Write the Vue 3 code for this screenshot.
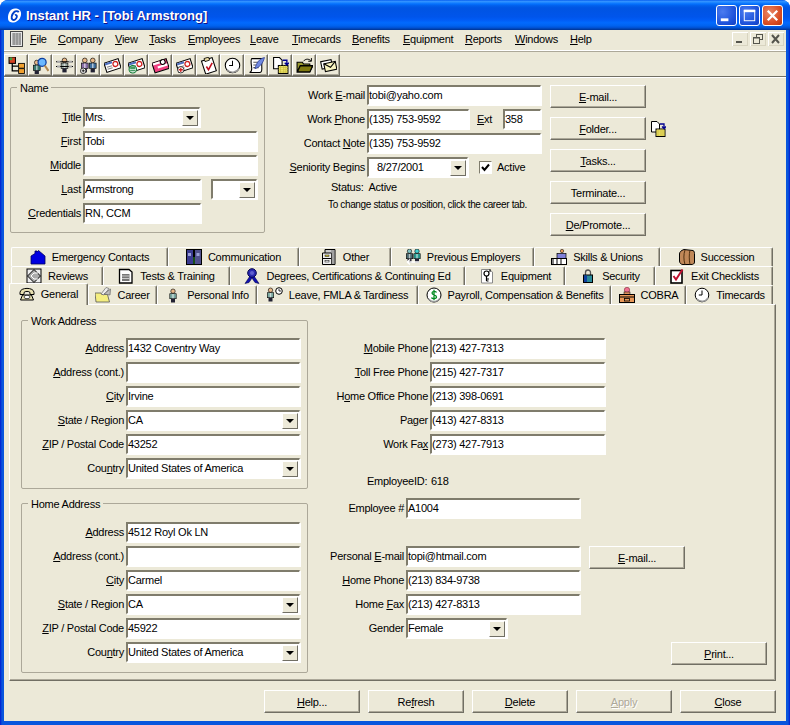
<template>
  <div class="window">
    <header class="titlebar">
      <svg class="logo" viewBox="0 0 16 16" v-html="logo"></svg>
      <span class="title">Instant HR - [Tobi Armstrong]</span>
      <div class="capbtns">
        <span class="cap"><svg viewBox="0 0 20 20" v-html="capIcons.min"></svg></span>
        <span class="cap"><svg viewBox="0 0 20 20" v-html="capIcons.max"></svg></span>
        <span class="cap red"><svg viewBox="0 0 20 20" v-html="capIcons.close"></svg></span>
      </div>
    </header>

    <nav class="menubar">
      <svg class="docicon" viewBox="0 0 14 16" v-html="docIcon"></svg>
      <span v-for="m in menus" :key="m.t" class="menu" :style="{ width: m.w + 'px' }" v-html="mn(m.t)"></span>
      <div class="mdi">
        <span class="mdibtn"><svg viewBox="0 0 14 12" v-html="capIcons.mdiMin"></svg></span>
        <span class="mdibtn"><svg viewBox="0 0 14 12" v-html="capIcons.mdiRestore"></svg></span>
        <span class="mdibtn"><svg viewBox="0 0 14 12" v-html="capIcons.mdiClose"></svg></span>
      </div>
    </nav>

    <div class="toolbar">
      <span v-for="(t, i) in tools" :key="i" class="tool"><svg class="ico17" viewBox="0 0 16 16" v-html="icons[t]"></svg></span>
    </div>

    <main class="client">
      <section class="top">
        <div class="group namegroup">
          <span class="legend">Name</span>
          <div v-for="r in nameRows" :key="r.l" class="row">
            <label class="lbl w70" v-html="mn(r.l)"></label>
            <div class="field" :style="{ width: r.w + 'px' }">
              <span class="val">{{ r.v }}</span><i v-if="r.sel" class="arrow"></i>
            </div>
            <div v-if="r.suffix" class="field suffix"><span class="val"></span><i class="arrow"></i></div>
          </div>
        </div>

        <div class="contact">
          <div v-for="r in contactRows" :key="r.l" class="row">
            <label class="lbl w100" v-html="mn(r.l)"></label>
            <div class="field" :style="{ width: r.w + 'px' }" :class="{ indent: r.indent }">
              <span class="val">{{ r.v }}</span><i v-if="r.sel" class="arrow"></i>
            </div>
            <template v-if="r.ext">
              <label class="extlbl" v-html="mn('&Ext')"></label>
              <div class="field w38"><span class="val">358</span></div>
            </template>
            <template v-if="r.active">
              <span class="check"><svg viewBox="0 0 11 11"><path d="M2 5 L4.5 8 L9 2.5" fill="none" stroke="#000" stroke-width="2"/></svg></span>
              <span class="activelbl">Active</span>
            </template>
          </div>
          <div class="status">Status:&nbsp; Active</div>
          <div class="hint">To change status or position, click the career tab.</div>
        </div>

        <div class="actions">
          <div v-for="b in topButtons" :key="b" class="actionrow">
            <button class="btn" v-html="mn(b)"></button>
            <svg v-if="b === '&Folder...'" class="ico16" viewBox="0 0 16 16" v-html="icons.fileArrow"></svg>
          </div>
        </div>
      </section>

      <section class="tabs">
        <div v-for="(row, ri) in tabRows" :key="ri" class="tabrow" :class="'tabrow' + ri">
          <div v-for="t in row" :key="t.t" class="tab" :class="{ active: t.active }" :style="{ width: t.w + 'px' }">
            <svg class="ico16" viewBox="0 0 16 16" v-html="icons[t.i]"></svg>
            <span>{{ t.t }}</span>
          </div>
        </div>
      </section>

      <section class="panel">
        <div class="addresses">
          <div v-for="g in addressGroups" :key="g.title" class="group addr" :class="g.cls">
            <span class="legend">{{ g.title }}</span>
            <div v-for="r in g.rows" :key="r.l" class="row">
              <label class="lbl w102" v-html="mn(r.l)"></label>
              <div class="field w174"><span class="val">{{ r.v }}</span><i v-if="r.sel" class="arrow"></i></div>
            </div>
          </div>
        </div>

        <div class="personal">
          <div class="phones">
            <div v-for="r in phoneRows" :key="r.l" class="row">
              <label class="lbl w120" v-html="mn(r.l)"></label>
              <div class="field w175"><span class="val">{{ r.v }}</span></div>
            </div>
          </div>
          <div class="empid"><span class="empidlbl">EmployeeID:</span><span>618</span></div>
          <div class="row empnum">
            <label class="lbl w96">Employee #</label>
            <div class="field w174"><span class="val">A1004</span></div>
          </div>
          <div class="home">
            <div v-for="r in homeRows" :key="r.l" class="row">
              <label class="lbl w96" v-html="mn(r.l)"></label>
              <div class="field" :style="{ width: r.w + 'px' }"><span class="val">{{ r.v }}</span><i v-if="r.sel" class="arrow"></i></div>
              <button v-if="r.btn" class="btn rowbtn" v-html="mn('&E-mail...')"></button>
            </div>
          </div>
          <button class="btn print" v-html="mn('&Print...')"></button>
        </div>
      </section>

      <footer class="footer">
        <button v-for="b in footerButtons" :key="b.t" class="btn" :disabled="b.off" v-html="mn(b.t)"></button>
      </footer>
    </main>
  </div>
</template>

<script setup>
const mn = (s) => s.replace(/&(.)/, '<u>$1</u>')

const menus = [
  { t: '&File', w: 28 }, { t: '&Company', w: 57 }, { t: '&View', w: 34 }, { t: '&Tasks', w: 39 },
  { t: '&Employees', w: 62 }, { t: '&Leave', w: 42 }, { t: '&Timecards', w: 60 }, { t: '&Benefits', w: 51 },
  { t: '&Equipment', w: 62 }, { t: '&Reports', w: 50 }, { t: '&Windows', w: 55 }, { t: '&Help', w: 40 },
]

const tools = ['tree', 'search', 'org', 'people', 'card', 'cardMoney', 'cardPink', 'cardPlus', 'clip', 'clock', 'scroll', 'fileArrow', 'folder', 'mail']

const nameRows = [
  { l: '&Title', v: 'Mrs.', w: 117, sel: true },
  { l: '&First', v: 'Tobi', w: 174 },
  { l: '&Middle', v: '', w: 174 },
  { l: '&Last', v: 'Armstrong', w: 118, suffix: true },
  { l: '&Credentials', v: 'RN, CCM', w: 118 },
]

const contactRows = [
  { l: 'Work &E-mail', v: 'tobi@yaho.com', w: 174 },
  { l: 'Work &Phone', v: '(135) 753-9592', w: 102, ext: true },
  { l: 'Contact &Note', v: '(135) 753-9592', w: 174 },
  { l: '&Seniority Begins', v: '8/27/2001', w: 101, sel: true, indent: true, active: true },
]

const topButtons = ['&E-mail...', '&Folder...', '&Tasks...', 'Terminate...', '&De/Promote...']

const tabRows = [
  [
    { t: 'Emergency Contacts', i: 'house', w: 157 },
    { t: 'Communication', i: 'doors', w: 131 },
    { t: 'Other', i: 'cabinet', w: 92 },
    { t: 'Previous Employers', i: 'prev', w: 143 },
    { t: 'Skills & Unions', i: 'skills', w: 126 },
    { t: 'Succession', i: 'case', w: 113 },
  ],
  [
    { t: 'Reviews', i: 'review', w: 92 },
    { t: 'Tests & Training', i: 'test', w: 127 },
    { t: 'Degrees, Certifications & Continuing Ed', i: 'ribbon', w: 235 },
    { t: 'Equipment', i: 'equip', w: 100 },
    { t: 'Security', i: 'lock', w: 90 },
    { t: 'Exit Checklists', i: 'exit', w: 118 },
  ],
  [
    { t: 'General', i: 'phone', w: 79, active: true },
    { t: 'Career', i: 'career', w: 69 },
    { t: 'Personal Info', i: 'person', w: 100 },
    { t: 'Leave, FMLA & Tardiness', i: 'leave', w: 161 },
    { t: 'Payroll, Compensation & Benefits', i: 'dollar', w: 193 },
    { t: 'COBRA', i: 'cobra', w: 75 },
    { t: 'Timecards', i: 'clock', w: 87 },
  ],
]

const addressGroups = [
  {
    title: 'Work Address', cls: 'work',
    rows: [
      { l: '&Address', v: '1432 Coventry Way' },
      { l: '&Address (cont.)', v: '' },
      { l: '&City', v: 'Irvine' },
      { l: '&State / Region', v: 'CA', sel: true },
      { l: '&ZIP / Postal Code', v: '43252' },
      { l: 'Cou&ntry', v: 'United States of America', sel: true },
    ],
  },
  {
    title: 'Home Address', cls: 'homeaddr',
    rows: [
      { l: '&Address', v: '4512 Royl Ok LN' },
      { l: '&Address (cont.)', v: '' },
      { l: '&City', v: 'Carmel' },
      { l: '&State / Region', v: 'CA', sel: true },
      { l: '&ZIP / Postal Code', v: '45922' },
      { l: 'Cou&ntry', v: 'United States of America', sel: true },
    ],
  },
]

const phoneRows = [
  { l: '&Mobile Phone', v: '(213) 427-7313' },
  { l: '&Toll Free Phone', v: '(215) 427-7317' },
  { l: 'H&ome Office Phone', v: '(213) 398-0691' },
  { l: 'Pa&ger', v: '(413) 427-8313' },
  { l: 'Work Fa&x', v: '(273) 427-7913' },
]

const homeRows = [
  { l: 'Personal &E-mail', v: 'topi@htmail.com', w: 174, btn: true },
  { l: '&Home Phone', v: '(213) 834-9738', w: 174 },
  { l: 'Home &Fax', v: '(213) 427-8313', w: 174 },
  { l: 'Gender', v: 'Female', w: 101, sel: true },
]

const footerButtons = [
  { t: '&Help...' }, { t: 'Re&fresh' }, { t: '&Delete' }, { t: '&Apply', off: true }, { t: '&Close' },
]

const logo = `<path d="M8.5 .5C12.5 .5 15 2.5 15 6c0 5-4 9.5-9.5 9.5C2.5 15.5 1 13.5 1 10.5 1 5 4 .5 8.5 .5Z" fill="#fff"/>
<path d="M12.5 4.5C11.5 3 9 3 7.5 4.5 5 7 4 11 6 12.5 7.5 13.5 10 12 10.5 9.5 10.8 8 9.5 7 8.5 7.8" fill="none" stroke="#0040c8" stroke-width="2"/>`

const capIcons = {
  min: '<rect x="4" y="13" width="8" height="3" fill="#fff"/>',
  max: '<rect x="4.5" y="4.5" width="11" height="11" fill="none" stroke="#fff"/><rect x="4" y="4" width="12" height="2.5" fill="#fff"/>',
  close: '<path d="M5 5 L15 15 M15 5 L5 15" stroke="#fff" stroke-width="2.4"/>',
  mdiMin: '<rect x="3" y="8" width="6" height="2" fill="#55554d"/>',
  mdiRestore: '<rect x="5.5" y="1.5" width="6" height="5" fill="none" stroke="#55554d"/><rect x="2.5" y="4.5" width="6" height="6" fill="#ece9d8" stroke="#55554d"/><rect x="2" y="4" width="7" height="1.5" fill="#55554d"/>',
  mdiClose: '<path d="M3 2 L10 10 M10 2 L3 10" stroke="#55554d" stroke-width="2"/>',
}

const docIcon = `<rect x=".5" y=".5" width="12" height="15" fill="#e8e8e8" stroke="#444"/><path d="M2 3H11M2 5H11M2 7H11M2 9H11M2 11H11M2 13H11M4 2V14M7 2V14M10 2V14" stroke="#777" stroke-width=".9"/>`

const P = (x, y, c = '#7a98a8', h = '#e8b888') =>
  `<circle cx="${x + 3.5}" cy="${y + 2.2}" r="2.2" fill="${h}" stroke="#000" stroke-width=".6"/><rect x="${x + .3}" y="${y + 4.7}" width="6.4" height="5" fill="${c}" stroke="#000" stroke-width=".6"/><rect x="${x + 2.8}" y="${y + 5}" width="1.4" height="4.5" fill="#fff" opacity=".6"/><rect x="${x + 1.5}" y="${y + 9.7}" width="4" height="3.8" fill="#223"/>`
const clockIcon = `<circle cx="8" cy="8" r="6.8" fill="#fff" stroke="#000"/><path d="M3 12A6.8 6.8 0 0 0 14 11" fill="none" stroke="#999" stroke-width="1.5"/><path d="M8 3.5V8H4.8" fill="none" stroke="#000"/>`
const card = (band, ring, extra = '') =>
  `<g transform="rotate(-18 8 8)"><rect x="1" y="3.5" width="14" height="9" fill="#fff" stroke="#000"/><rect x="1.5" y="4" width="7" height="2" fill="${band}"/><rect x="2.5" y="7.5" width="5" height="1" fill="#888"/><rect x="2.5" y="9.5" width="5" height="1" fill="#888"/><circle cx="11" cy="7.5" r="2.3" fill="none" stroke="${ring}" stroke-width="1.2"/></g>${extra}`

const icons = {
  tree: `<rect x="1" y="0" width="6" height="6" fill="#d84020" stroke="#000"/><rect x="1.5" y=".5" width="2.5" height="2.5" fill="#40a040"/><path d="M4 6V13H10M4 8.5H10" fill="none" stroke="#000" stroke-width="1.2"/><rect x="10" y="6" width="5.5" height="4.5" fill="#f0a030" stroke="#000" stroke-width=".8"/><rect x="10" y="11" width="5.5" height="4.5" fill="#f0a030" stroke="#000" stroke-width=".8"/>`,
  search: `${P(1, 3, '#3a7a70')}<circle cx="9.5" cy="5" r="3.8" fill="#6ab8ff" stroke="#1040a0" stroke-width="1.2"/><path d="M12 8L15.5 13" stroke="#b08850" stroke-width="2"/>`,
  org: `${P(4.5, 1, '#9aa8a0')}<path d="M0 4.5H16M0 9H16" stroke="#000" stroke-width="1"/><rect x="1" y="3.5" width="3" height="2" fill="#aaa"/><rect x="12" y="3.5" width="3" height="2" fill="#aaa"/><rect x="1" y="8" width="3" height="2" fill="#aaa"/><rect x="12" y="8" width="3" height="2" fill="#aaa"/>`,
  people: `${P(1, 1, '#8a70a8')}${P(8.5, 1, '#3f6f9f')}<circle cx="3" cy="13" r="2.6" fill="#fff" stroke="#000" stroke-width=".7"/><path d="M1.5 13H4.5M3 11.5V14.5" stroke="#000" stroke-width=".8"/>`,
  card: card('#5070c0', '#d02020'),
  cardMoney: card('#5070c0', '#d02020', '<circle cx="4.5" cy="11.5" r="3.5" fill="#fff" stroke="#0a7a30"/><path d="M2 11H7M2 13H7M2 9.5H7" stroke="#0a7a30"/>'),
  cardPink: `<g transform="rotate(-18 8 8)"><rect x="1" y="3.5" width="14" height="9.5" fill="#f04080" stroke="#000"/><rect x="1.5" y="4" width="7" height="2" fill="#fff"/><rect x="5" y="8" width="9.5" height="2" fill="#fff"/><circle cx="11" cy="5.5" r="2.3" fill="#fff" stroke="#000"/></g>`,
  cardPlus: card('#5070c0', '#d02020', '<circle cx="4.5" cy="12" r="3" fill="#fff" stroke="#000" stroke-width=".7"/><path d="M2.5 12H6.5M4.5 10V14" stroke="#d02020" stroke-width="1.2"/>'),
  clip: `<g transform="rotate(-18 8 8)"><rect x="3" y="2" width="10.5" height="13" fill="#fff" stroke="#000"/><rect x="6" y=".5" width="4.5" height="3" fill="#e8d8a0" stroke="#000" stroke-width=".7"/></g><path d="M6 9L8 12L11.5 5.5" fill="none" stroke="#c01020" stroke-width="1.5"/>`,
  clock: clockIcon,
  scroll: `<path d="M3.5 1.5H14C12.5 3 13 8 13 11C13 13 13 14.5 11 14.5H1.5C3 14 3.5 13 3.5 11C3.5 8 2 3 3.5 1.5Z" fill="#fff" stroke="#000"/><path d="M5 5H10M5 7.5H10M5 10H10" stroke="#555"/><path d="M15.5 .5C11 1.5 8 5 6.5 11C10 10 14 7 15.5 .5Z" fill="#7088e0" stroke="#2a3a90" stroke-width=".7"/>`,
  fileArrow: `<path d="M1.5 .5H7L9.5 3V11H1.5Z" fill="#fff" stroke="#000"/><rect x="6" y="8" width="9" height="7.5" fill="#f4ee70" stroke="#000"/><path d="M6 10H15M6 12H15M6 14H15M8 8V15M11 8V15M13 8V15" stroke="#c8b840" stroke-width=".7"/><path d="M10 3H14V7M12 5.5L14 7.5L16 5.5" fill="none" stroke="#000090" stroke-width="1.3"/>`,
  folder: `<path d="M1 14V5H6L7 6.5H13V8H4L1 14H13L16 8H13" fill="#9a9a30" stroke="#000"/><path d="M4 8.5H15.5L13 14H1.5Z" fill="#807a10" stroke="#000"/><path d="M7 4C9 1.5 12 1.5 14 3.5M14.5 1V4H11.5" fill="none" stroke="#000" stroke-width=".9"/>`,
  mail: `<g transform="rotate(-12 8 8)"><rect x="1.5" y="3" width="10" height="7" fill="#fff" stroke="#000"/><rect x="4" y="5.5" width="11" height="7.5" fill="#f8f4c0" stroke="#000"/><path d="M4 5.5L9.5 10L15 5.5" fill="none" stroke="#000"/></g>`,
  house: `<path d="M1 15V7L5 4.5V2H7V3L8.5 1.5L15 7V15Z" fill="#0000e0" stroke="#000060" stroke-width=".8"/>`,
  doors: `<rect x=".5" y=".5" width="7" height="15" fill="#3a3a90" stroke="#000"/><rect x="8.5" y=".5" width="7" height="15" fill="#50508c" stroke="#000"/><rect x="2" y="4" width="3" height="3" fill="#9aa0d8"/><rect x="10.5" y="4" width="3" height="3" fill="#9aa0d8"/><path d="M8 8V15" stroke="#30a030"/>`,
  cabinet: `<path d="M4 .5H14V15.5H4Z" fill="#ccc" stroke="#000"/><path d="M1.5 4H10.5V15.5H1.5Z" fill="#eee" stroke="#000"/><path d="M1.5 9.5H10.5" stroke="#000"/><rect x="4" y="6" width="4" height="1.5" fill="#e8d840" stroke="#000" stroke-width=".5"/><rect x="4" y="11.5" width="4" height="1.5" fill="#fff" stroke="#000" stroke-width=".5"/><path d="M11 1V15M13 1V15" stroke="#777"/>`,
  prev: `${P(1, 0, '#4a6a70', '#80c0c0')}${P(8.5, 0, '#2a9a90', '#40d0d0')}<path d="M2 13H14M2 13L5 10.5M2 13L5 15.5" fill="none" stroke="#fff" stroke-width="1.3"/>`,
  skills: `<circle cx="11" cy="2" r="1.7" fill="#e89858" stroke="#000" stroke-width=".5"/><rect x="6" y="4.5" width="9" height="6" fill="#8080d8" stroke="#000" stroke-width=".7"/><rect x=".5" y="9.5" width="15" height="6" fill="#fff" stroke="#000"/><path d="M2 10V15M6 10V15M10 10V15" stroke="#000"/>`,
  case: `<path d="M5 .5L14 1.5C15.5 2 15.5 4 15.5 6V13C15.5 15 14 15.5 12 15.5H4C2 15.5 .5 14 .5 12V5C.5 3 2 1.5 5 .5Z" fill="#c08858" stroke="#000"/><path d="M6 1C4.5 5 4.5 11 6 15.5M11 1C10 5 10 11 11 15.5" fill="none" stroke="#503010"/>`,
  review: `<rect x="1" y="1" width="14" height="14" fill="#eee" stroke="#000"/><path d="M8 1.5L14.5 8L8 14.5L1.5 8Z" fill="#aaa" stroke="#000"/><path d="M5 8L8 5L12 5M5 8L8 11L12 11" fill="none" stroke="#fff"/>`,
  test: `<path d="M1.5 1.5H11L14 4V15H1.5Z" fill="#fff" stroke="#000" stroke-width="1.3"/><rect x="4" y="6" width="7.5" height="7" fill="#777"/><path d="M4 8H11.5M4 10.5H11.5" stroke="#ccc"/>`,
  ribbon: `<path d="M6 8L1 15.5L5 14.5L8 10L11 14.5L15 15.5L10 8Z" fill="#1010b0" stroke="#000050" stroke-width=".6"/><circle cx="8" cy="5" r="4.3" fill="#2a2ab0" stroke="#000050"/><circle cx="8" cy="5" r="2" fill="#6060d0"/>`,
  equip: `<path d="M2.5 1.5H10L13.5 4V15H2.5Z" fill="#fff" stroke="#888"/><circle cx="7.5" cy="5.5" r="2.5" fill="none" stroke="#000" stroke-width="1.2"/><path d="M7.5 8V13M7.5 11H10M7.5 13H9.5" stroke="#000" stroke-width="1.2"/><path d="M11 1V4" stroke="#000"/>`,
  lock: `<path d="M5.5 7V4.5A2.5 2.5 0 0 1 10.5 4.5V7" fill="none" stroke="#555" stroke-width="1.3"/><rect x="3.5" y="7" width="9" height="7.5" fill="#2a8a9a" stroke="#000"/><rect x="4" y="7.5" width="3" height="6.5" fill="#1040a0"/>`,
  exit: `<rect x="2" y="2.5" width="11" height="12.5" fill="#fff" stroke="#000" stroke-width="1.6"/><path d="M4.5 8L7 11.5L13.5 1.5" fill="none" stroke="#c01030" stroke-width="2"/>`,
  phone: `<path d="M1 6.5C1 1 15 1 15 6.5V8.5H11V6.5C10 5 6 5 5 6.5V8.5H1Z" fill="#e8e0b0" stroke="#000"/><path d="M3.5 9H12.5L14.5 14H1.5Z" fill="#e8e0b0" stroke="#000"/><ellipse cx="8" cy="11" rx="3" ry="1.7" fill="#fff" stroke="#000" stroke-width=".7"/>`,
  career: `<path d="M1 15L0 6H6L7 7.5H12.5L14.5 15Z" fill="#f4ee80" stroke="#555" stroke-width=".8"/><path d="M6 7L11 .5L14 1.5L9 8Z" fill="#eee" stroke="#666" stroke-width=".7"/><path d="M9 7L15.5 2L15 8Z" fill="#bbb" stroke="#666" stroke-width=".7"/>`,
  person: P(4.5, 2, '#7aa8a0'),
  leave: `${P(0, 1, '#7aa8a0')}<circle cx="12" cy="4" r="3.3" fill="#fff" stroke="#000"/><path d="M12 2V4H14" fill="none" stroke="#000" stroke-width=".8"/>`,
  dollar: `<circle cx="8" cy="8" r="7" fill="#fff" stroke="#000"/><path d="M2.5 12A7 7 0 0 0 14 11" fill="none" stroke="#999" stroke-width="1.3"/><path d="M10.5 5.5C10 4 6 4 6 6C6 8.5 10.5 7.5 10.5 10C10.5 12 6 12 5.5 10.5M8 2.8V13.2" fill="none" stroke="#008a20" stroke-width="1.3"/>`,
  cobra: `<circle cx="8" cy="3" r="2.7" fill="#f07090" stroke="#803040" stroke-width=".6"/><rect x="5" y="5" width="6" height="2.5" fill="#e09060" stroke="#000" stroke-width=".5"/><rect x=".5" y="7.5" width="15" height="8" fill="#e89858" stroke="#000"/><path d="M.5 10H15.5" stroke="#000"/><rect x="5.5" y="11.5" width="5" height="2.5" fill="none" stroke="#000" stroke-width=".8"/>`,
}
</script>

<style>
html, body { margin: 0; background: #fff; }
</style>

<style scoped>
.window {
  width: 790px; height: 725px; box-sizing: border-box;
  padding: 0 4px 4px;
  display: flex; flex-direction: column;
  border-radius: 8px 8px 0 0; overflow: hidden;
  background: linear-gradient(90deg, #0019cf 0, #0855dd 2px, #0855dd 788px, #0019cf 100%);
  font-family: "Liberation Sans", Arial, sans-serif;
  font-size: 11px; letter-spacing: -.25px; color: #000;
}
svg { display: block; flex: none; }
.titlebar {
  height: 30px; flex: none; margin: 0 -4px;
  padding: 0 7px; display: flex; align-items: center;
  background: linear-gradient(#0058ee 0, #3593ff 4%, #288eff 7%, #127dff 10%, #036ffc 14%, #0262ee 18%, #0057e5 24%, #0054e3 30%, #0055eb 56%, #005bf5 66%, #026afe 76%, #0062ef 86%, #0052d6 92%, #0040ab 97%, #003092 100%);
}
.logo { width: 15px; height: 15px; }
.title {
  margin-left: 4px; color: #fff; font-weight: 700; font-size: 13px;
  letter-spacing: 0;
  text-shadow: 1px 1px 0 #0f1089;
}
.capbtns { margin-left: auto; display: flex; gap: 2px; }
.cap {
  width: 21px; height: 21px; box-sizing: border-box; border: 1px solid #fff; border-radius: 3px;
  background: radial-gradient(circle at 30% 30%, #4a7bf0, #1a4fd8 70%, #1440c0);
}
.cap svg { width: 19px; height: 19px; }
.cap.red { background: radial-gradient(circle at 35% 35%, #e88868, #d84a20 65%, #b83810); }

.menubar {
  height: 22px; box-sizing: border-box; flex: none; background: #ece9d8;
  display: flex; align-items: center; padding: 0 2px 3px 6px;
  border-bottom: 1px solid #aca899; box-shadow: inset 0 -1px 0 #fff;
}
.docicon { width: 14px; height: 16px; margin-right: 6px; }
.menu { display: block; white-space: nowrap; }
.mdi { margin-left: auto; display: flex; gap: 2px; }
.mdibtn {
  width: 16px; height: 14px; background: #ece9d8;
  box-shadow: inset 1px 1px 0 #fff, inset -1px -1px 0 #d8d4c0;
}
.mdibtn svg { width: 14px; height: 12px; margin: 1px; }

.toolbar {
  height: 25px; box-sizing: border-box; flex: none; background: #ece9d8;
  display: flex; align-items: flex-start; padding: 2px 0 0 0;
  border-bottom: 1px solid #716f64;
}
.tool {
  width: 24px; height: 22px; box-sizing: border-box; flex: none;
  display: flex; align-items: center; justify-content: center;
  border: 1px solid; border-color: #fff #716f64 #716f64 #fff;
  box-shadow: inset -1px -1px 0 #aca899;
}
.ico17 { width: 17px; height: 17px; }
.ico16 { width: 16px; height: 16px; }

.client {
  flex: 1; min-height: 0; background: #ece9d8;
  border-top: 1px solid #fff; padding-left: 5px;
  display: flex; flex-direction: column;
}
.top { display: flex; padding-top: 7px; align-items: flex-start; }

.group {
  position: relative; box-sizing: border-box;
  border: 1px solid #aca899; border-radius: 2px;
  display: flex; flex-direction: column; gap: 4px;
}
.legend {
  position: absolute; top: -6px; left: 6px; padding: 0 3px;
  background: #ece9d8; line-height: 13px;
}
.namegroup { width: 255px; height: 146px; margin: 2px 0 0 1px; padding-top: 19px; }
.row { display: flex; align-items: center; gap: 2px; height: 20px; }
.lbl { text-align: right; white-space: nowrap; flex: none; }
.w70 { width: 70px; }
.w100 { width: 100px; }
.w102 { width: 102px; }
.w120 { width: 120px; }
.w96 { width: 96px; }
.w174 { width: 174px; }
.w175 { width: 175px; }
.w38 { width: 38px; }

.field {
  height: 20px; box-sizing: border-box; flex: none; background: #fff;
  border-style: solid; border-width: 2px 1px 1px 2px;
  border-color: #7f7c6c #fff #fff #7f7c6c;
  display: flex; align-items: center; padding-left: 0;
  box-shadow: 1px 1px 0 #fff;
}
.val { flex: 1; white-space: nowrap; overflow: hidden; line-height: 15px; }
.indent .val { padding-left: 8px; }
.suffix { width: 46px; margin-left: 8px; }
.arrow {
  width: 16px; height: 16px; box-sizing: border-box; flex: none; margin-right: 1px;
  background: #ece9d8; border: 1px solid; border-color: #fff #716f64 #716f64 #fff;
  display: flex; align-items: center; justify-content: center;
}
.arrow::after {
  content: ""; border-style: solid; border-width: 4px 4px 0; border-color: #000 transparent transparent;
}

.contact { width: 285px; display: flex; flex-direction: column; gap: 4px; }
.extlbl { margin-left: 6px; width: 24px; flex: none; }
.check {
  width: 13px; height: 13px; box-sizing: border-box; margin-left: 9px; background: #fff;
  border: 1px solid; border-color: #7f7c6c #fff #fff #7f7c6c;
}
.check svg { width: 11px; height: 11px; }
.activelbl { margin-left: 3px; }
.status { margin: -2px 0 0 66px; line-height: 17px; }
.hint { margin: -3px 0 0 63px; font-size: 10px; letter-spacing: -.35px; line-height: 16px; white-space: nowrap; }

.actions { display: flex; flex-direction: column; gap: 9px; }
.actionrow { display: flex; align-items: center; gap: 4px; }
.btn {
  width: 96px; height: 23px; box-sizing: border-box; padding: 0; flex: none;
  background: #ece9d8; font: inherit; letter-spacing: inherit; color: #000;
  border: 1px solid; border-color: #fff #716f64 #716f64 #fff;
  box-shadow: inset -1px -1px 0 #aca899;
}
.btn:disabled { color: #aca899; text-shadow: 1px 1px 0 #fff; }

.tabs { margin-top: 11px; }
.tabrow { display: flex; height: 19px; padding-left: 2px; }
.tabrow2 { padding-left: 0; }
.tab {
  box-sizing: border-box; flex: none; display: flex; align-items: center; justify-content: center; gap: 6px;
  height: 19px; white-space: nowrap; background: #ece9d8;
  border-top: 1px solid #fff; border-left: 1px solid #fff; border-right: 1px solid #716f64;
  border-radius: 2px 2px 0 0;
  box-shadow: inset -1px 0 0 #aca899;
}
.tab.active {
  height: 22px; margin-top: -2px; position: relative; z-index: 1; padding-bottom: 2px;
}

.panel {
  width: 767px; height: 377px; box-sizing: border-box; flex: none;
  border: 1px solid; border-color: #fff #716f64 #716f64 #fff;
  box-shadow: inset -1px -1px 0 #aca899;
  padding: 15px 8px 0 11px; display: flex;
}
.addresses { width: 287px; flex: none; display: flex; flex-direction: column; gap: 14px; }
.addr { width: 287px; }
.work { height: 169px; padding-top: 17px; }
.homeaddr { height: 170px; padding-top: 18px; }

.personal { flex: 1; display: flex; flex-direction: column; padding-top: 18px; }
.phones, .home { display: flex; flex-direction: column; gap: 4px; }
.empid { margin: 17px 0 0 59px; height: 20px; display: flex; align-items: center; }
.empidlbl { width: 64px; }
.empnum { margin: 7px 0 0 0; }
.home { margin-top: 28px; }
.rowbtn { margin-left: 7px; align-self: flex-start; }
.print { align-self: flex-end; margin-top: 4px; }

.footer { display: flex; justify-content: flex-end; gap: 8px; width: 767px; margin-top: 9px; }
</style>
